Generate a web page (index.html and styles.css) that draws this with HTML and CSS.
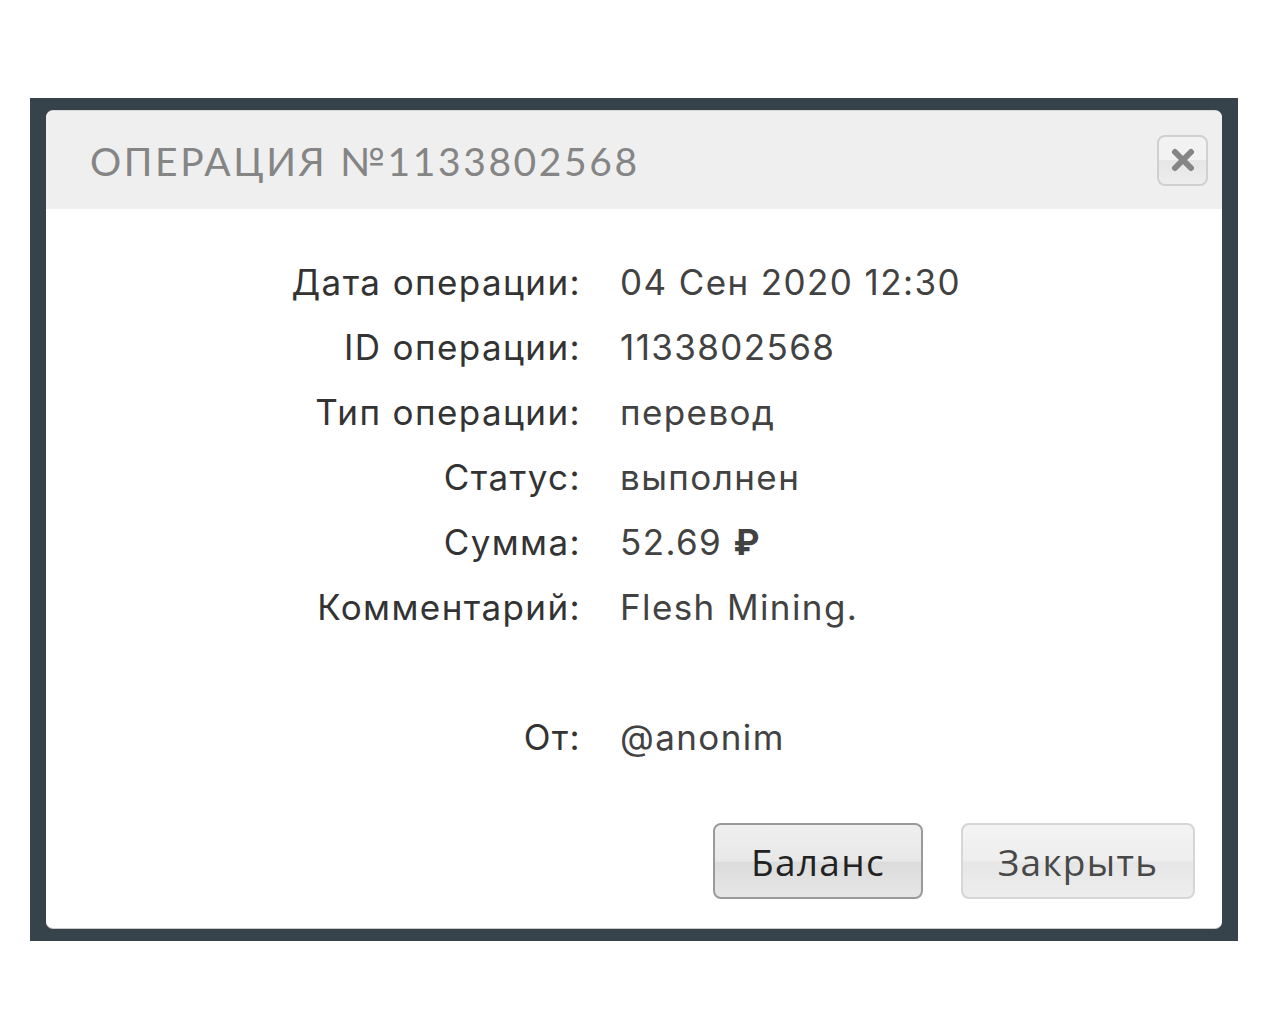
FILE: index.html
```html
<!DOCTYPE html>
<html lang="ru">
<head>
<meta charset="utf-8">
<link rel="stylesheet" href="styles.css">
</head>
<body>
<div class="backdrop">
  <div class="modal">
    <div class="modal-header">
      <h1 class="title">ОПЕРАЦИЯ №1133802568</h1>
      <button class="close-x" aria-label="close">
        <svg width="26" height="26" viewBox="0 0 26 26"><path d="M5 5 L21 21 M21 5 L5 21" stroke="#858585" stroke-width="6" stroke-linecap="round"/></svg>
      </button>
    </div>
    <div class="modal-body">
      <div class="details">
        <div class="label">Дата операции:</div><div class="value">04 Сен 2020 12:30</div>
        <div class="label">ID операции:</div><div class="value">1133802568</div>
        <div class="label">Тип операции:</div><div class="value">перевод</div>
        <div class="label">Статус:</div><div class="value">выполнен</div>
        <div class="label">Сумма:</div><div class="value">52.69 <b class="rub">₽</b></div>
        <div class="label">Комментарий:</div><div class="value">Flesh Mining.</div>
        <div class="label spacer"></div><div class="value spacer"></div>
        <div class="label">От:</div><div class="value">@anonim</div>
      </div>
      <div class="actions">
        <button class="btn btn-primary">Баланс</button>
        <button class="btn btn-light">Закрыть</button>
      </div>
    </div>
  </div>
</div>
</body>
</html>
```
FILE: styles.css
```css
html, body {
  margin: 0;
  padding: 0;
  background: #ffffff;
}
.backdrop {
  margin: 98px 0 0 30px;
  width: 1208px;
  height: 843px;
  background: #37434b;
  padding: 13px 16px 0 16px;
  box-sizing: border-box;
}
.modal {
  width: 1176px;
  height: 817px;
  background: #ffffff;
  border-radius: 7px;
  box-shadow: 0 1px 0 #c8cbcd, 0 -1px 0 #d5d8da;
  overflow: hidden;
  display: flex;
  flex-direction: column;
}
.modal-header {
  height: 98px;
  background: #efefef;
  display: flex;
  align-items: center;
  justify-content: space-between;
  padding: 0 14px 0 44px;
  box-sizing: border-box;
}
.title {
  margin: 0;
  font-family: "Lato", sans-serif;
  font-weight: 400;
  font-size: 39px;
  letter-spacing: 2.6px;
  color: #858585;
  padding-top: 2px;
}
.close-x {
  width: 51px;
  height: 51px;
  border: 2px solid #d0d0d0;
  border-radius: 8px;
  background: linear-gradient(#f2f2f2 0%, #f2f2f2 50%, #e6e6e6 50%, #ededed 100%);
  display: flex;
  align-items: center;
  justify-content: center;
  padding: 0;
}
.modal-body {
  flex: 1;
  display: flex;
  flex-direction: column;
  padding: 41px 27px 29px 0;
}
.details {
  display: grid;
  grid-template-columns: 535px auto;
  column-gap: 39px;
  font-family: "Inter", sans-serif;
  font-size: 35px;
  letter-spacing: 1.4px;
  line-height: 65px;
}
.label {
  text-align: right;
  color: #333333;
}
.value {
  color: #424242;
}
.spacer {
  height: 65px;
}
.rub {
  font-weight: 700;
}
.actions {
  margin-top: auto;
  display: flex;
  justify-content: flex-end;
  gap: 38px;
}
.btn {
  height: 76px;
  border-radius: 8px;
  font-family: "Open Sans", sans-serif;
  font-size: 37px;
  letter-spacing: 1.3px;
  padding: 0;
  box-sizing: border-box;
}
.btn-primary {
  width: 210px;
  border: 2px solid #9a9a9a;
  color: #222222;
  background: linear-gradient(#efefef 0%, #e8e8e8 50%, #dcdcdc 52%, #e6e6e6 100%);
}
.btn-light {
  width: 234px;
  border: 2px solid #d6d6d6;
  color: #484848;
  background: linear-gradient(#f3f3f3 0%, #eeeeee 50%, #e6e6e6 52%, #ededed 100%);
}
```
